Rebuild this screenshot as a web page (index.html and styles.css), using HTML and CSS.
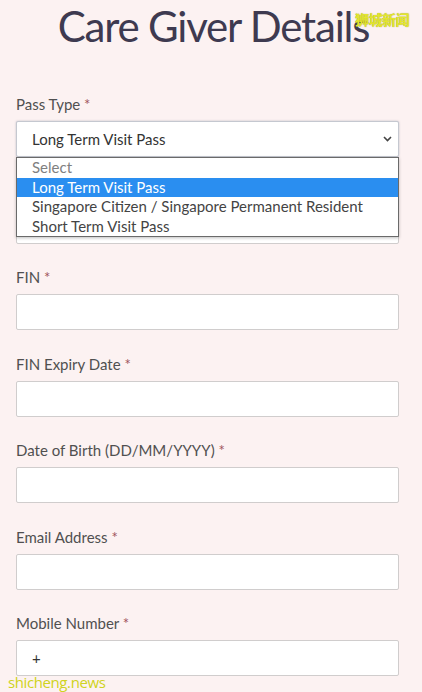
FILE: index.html
```html
<!DOCTYPE html>
<html lang="en">
<head>
  <meta charset="UTF-8">
  <meta name="viewport" content="width=device-width, initial-scale=1.0">
  <title>Care Giver Details</title>
  <link rel="stylesheet" href="styles.css">
</head>
<body>
  <h1 class="title">Care Giver Details</h1>
  <span class="mark-top">狮城新闻</span>

  <form class="details">
    <div class="field">
      <label class="label">Pass Type <span class="req">*</span></label>
      <div class="select-wrap">
        <div class="select">
          <span>Long Term Visit Pass</span>
          <svg class="chevron" width="9" height="6" viewBox="0 0 9 6">
            <path d="M1 1l3.5 3.5L8 1" fill="none" stroke="#444" stroke-width="1.6"/>
          </svg>
        </div>
        <ul class="options">
          <li class="placeholder">Select</li>
          <li class="chosen">Long Term Visit Pass</li>
          <li>Singapore Citizen / Singapore Permanent Resident</li>
          <li>Short Term Visit Pass</li>
        </ul>
      </div>
    </div>

    <div class="field">
      <label class="label">Name <span class="req">*</span></label>
      <div class="input"></div>
    </div>

    <div class="field">
      <label class="label">FIN <span class="req">*</span></label>
      <div class="input"></div>
    </div>

    <div class="field">
      <label class="label">FIN Expiry Date <span class="req">*</span></label>
      <div class="input"></div>
    </div>

    <div class="field">
      <label class="label">Date of Birth (DD/MM/YYYY) <span class="req">*</span></label>
      <div class="input"></div>
    </div>

    <div class="field">
      <label class="label">Email Address <span class="req">*</span></label>
      <div class="input"></div>
    </div>

    <div class="field">
      <label class="label">Mobile Number <span class="req">*</span></label>
      <div class="input">+</div>
    </div>
  </form>

  <span class="mark-bottom">shicheng.news</span>
</body>
</html>
```

FILE: styles.css
```css
body {
  margin: 0;
  padding: 0 23px 0 16px;
  background: #fcf2f2;
  font-family: Lato, "Open Sans", sans-serif;
  color: #444;
  height: 692px;
  overflow: hidden;
  position: relative;
}

.title {
  margin: 0;
  font-size: 42px;
  font-weight: 400;
  line-height: 52px;
  letter-spacing: -1.2px;
  text-align: center;
  color: #3e3a50;
  padding-left: 12px;
}

.mark-top {
  position: absolute;
  top: 9px;
  left: 355px;
  font-family: "Noto Sans CJK SC", sans-serif;
  font-size: 14px;
  font-weight: 700;
  color: #e4e62c;
  text-shadow: 0 0 1px #9a9a20;
  letter-spacing: -0.5px;
}

.mark-bottom {
  position: absolute;
  left: 8px;
  top: 672px;
  font-family: "Open Sans", sans-serif;
  font-size: 15px;
  color: #cfd320;
  letter-spacing: -0.4px;
}

.details {
  display: flex;
  flex-direction: column;
  gap: 24.5px;
  padding-top: 43px;
}

.field {
  display: flex;
  flex-direction: column;
}

.label {
  font-size: 15px;
  line-height: 18px;
  margin-bottom: 8px;
  color: #505050;
}

.req {
  color: #a0525a;
}

.input, .select {
  height: 36px;
  box-sizing: border-box;
  background: #fff;
  border: 1px solid #d0cdcd;
  border-radius: 2px;
  padding: 0 15px;
  display: flex;
  align-items: center;
  font-size: 15px;
  color: #333;
}

.select-wrap {
  position: relative;
}

.select {
  justify-content: space-between;
  border-color: #c5c8d0;
  box-shadow: 0 0 2px rgba(120, 130, 150, 0.5);
  padding-right: 6px;
}

.options {
  position: absolute;
  top: 36px;
  left: 0;
  right: 0;
  margin: 0;
  padding: 0;
  list-style: none;
  background: #fff;
  border: 1px solid #6a6a6a;
  box-shadow: 0 1px 3px rgba(0, 0, 0, 0.25);
  font-size: 15px;
  z-index: 2;
}

.options li {
  height: 19.5px;
  line-height: 19.5px;
  padding-left: 15px;
  color: #444;
}

.options .placeholder {
  color: #808080;
}

.options .chosen {
  background: #2a8ef0;
  color: #fff;
}
```
